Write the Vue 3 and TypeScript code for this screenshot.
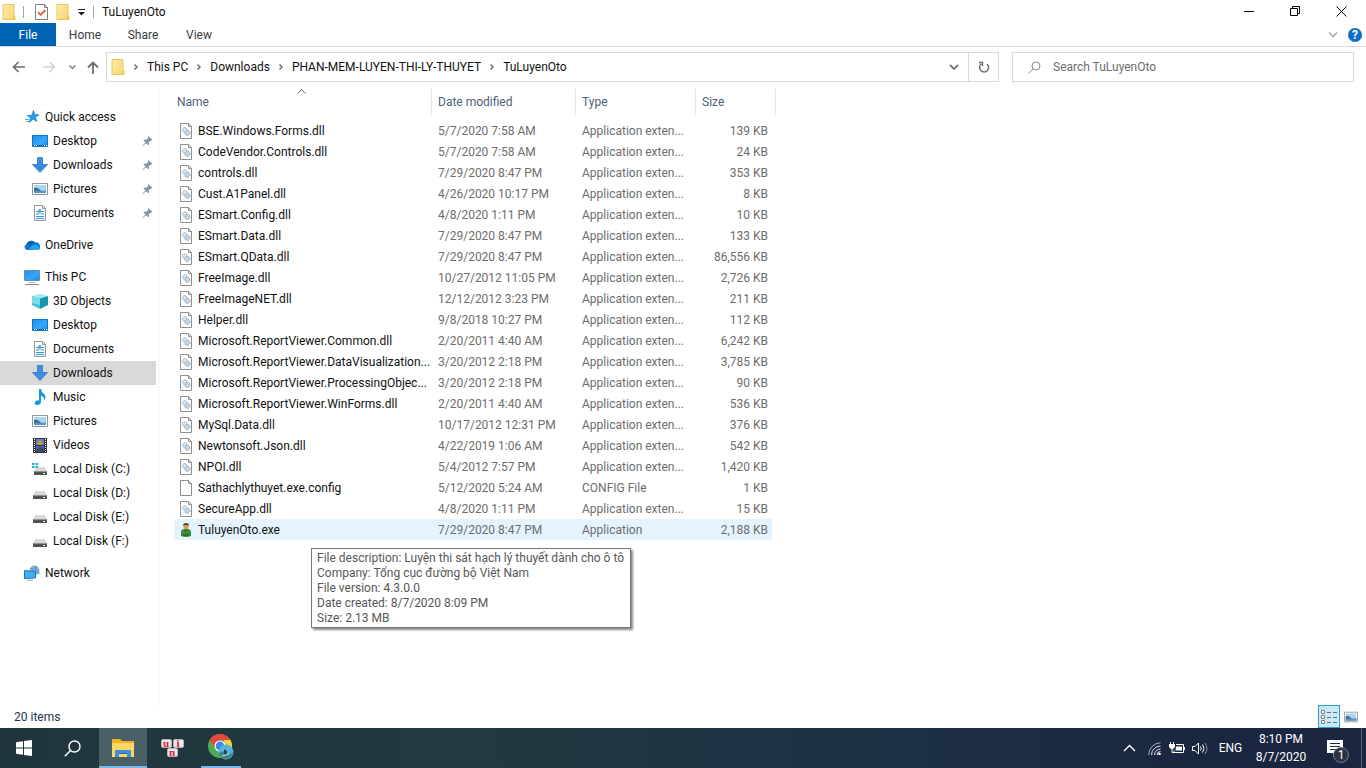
<script setup lang="ts">
interface NavItem {
  label: string
  icon: string
  root?: boolean
  pinned?: boolean
  selected?: boolean
}

interface FileRow {
  name: string
  date: string
  type: string
  size: string
  icon: string
  hover?: boolean
}

const groups: NavItem[][] = [
  [
    { label: 'Quick access', icon: 'star', root: true },
    { label: 'Desktop', icon: 'desktop', pinned: true },
    { label: 'Downloads', icon: 'download', pinned: true },
    { label: 'Pictures', icon: 'picture', pinned: true },
    { label: 'Documents', icon: 'document', pinned: true },
  ],
  [{ label: 'OneDrive', icon: 'cloud', root: true }],
  [
    { label: 'This PC', icon: 'pc', root: true },
    { label: '3D Objects', icon: 'cube' },
    { label: 'Desktop', icon: 'desktop' },
    { label: 'Documents', icon: 'document' },
    { label: 'Downloads', icon: 'download', selected: true },
    { label: 'Music', icon: 'music' },
    { label: 'Pictures', icon: 'picture' },
    { label: 'Videos', icon: 'video' },
    { label: 'Local Disk (C:)', icon: 'sysdisk' },
    { label: 'Local Disk (D:)', icon: 'disk' },
    { label: 'Local Disk (E:)', icon: 'disk' },
    { label: 'Local Disk (F:)', icon: 'disk' },
  ],
  [{ label: 'Network', icon: 'network', root: true }],
]

const dll = (name: string, date: string, size: string): FileRow => ({
  name,
  date,
  size,
  type: 'Application exten...',
  icon: 'dll',
})

const files: FileRow[] = [
  dll('BSE.Windows.Forms.dll', '5/7/2020 7:58 AM', '139 KB'),
  dll('CodeVendor.Controls.dll', '5/7/2020 7:58 AM', '24 KB'),
  dll('controls.dll', '7/29/2020 8:47 PM', '353 KB'),
  dll('Cust.A1Panel.dll', '4/26/2020 10:17 PM', '8 KB'),
  dll('ESmart.Config.dll', '4/8/2020 1:11 PM', '10 KB'),
  dll('ESmart.Data.dll', '7/29/2020 8:47 PM', '133 KB'),
  dll('ESmart.QData.dll', '7/29/2020 8:47 PM', '86,556 KB'),
  dll('FreeImage.dll', '10/27/2012 11:05 PM', '2,726 KB'),
  dll('FreeImageNET.dll', '12/12/2012 3:23 PM', '211 KB'),
  dll('Helper.dll', '9/8/2018 10:27 PM', '112 KB'),
  dll('Microsoft.ReportViewer.Common.dll', '2/20/2011 4:40 AM', '6,242 KB'),
  dll('Microsoft.ReportViewer.DataVisualization...', '3/20/2012 2:18 PM', '3,785 KB'),
  dll('Microsoft.ReportViewer.ProcessingObjec...', '3/20/2012 2:18 PM', '90 KB'),
  dll('Microsoft.ReportViewer.WinForms.dll', '2/20/2011 4:40 AM', '536 KB'),
  dll('MySql.Data.dll', '10/17/2012 12:31 PM', '376 KB'),
  dll('Newtonsoft.Json.dll', '4/22/2019 1:06 AM', '542 KB'),
  dll('NPOI.dll', '5/4/2012 7:57 PM', '1,420 KB'),
  { name: 'Sathachlythuyet.exe.config', date: '5/12/2020 5:24 AM', type: 'CONFIG File', size: '1 KB', icon: 'file' },
  dll('SecureApp.dll', '4/8/2020 1:11 PM', '15 KB'),
  { name: 'TuluyenOto.exe', date: '7/29/2020 8:47 PM', type: 'Application', size: '2,188 KB', icon: 'exe', hover: true },
]

const crumbs: string[] = ['This PC', 'Downloads', 'PHAN-MEM-LUYEN-THI-LY-THUYET', 'TuLuyenOto']

const tooltip: string[] = [
  'File description: Luyện thi sát hạch lý thuyết dành cho ô tô',
  'Company: Tổng cục đường bộ Việt Nam',
  'File version: 4.3.0.0',
  'Date created: 8/7/2020 8:09 PM',
  'Size: 2.13 MB',
]
</script>

<template>
  <div class="screen">
    <svg class="defs" aria-hidden="true">
      <defs>
        <linearGradient id="g-blue" x1="0" y1="0" x2="1" y2="1">
          <stop offset="0" stop-color="#1f8be6" /><stop offset="0.6" stop-color="#35aaf8" /><stop offset="1" stop-color="#1583e0" />
        </linearGradient>
        <linearGradient id="g-folder" x1="0" y1="0" x2="1" y2="1">
          <stop offset="0" stop-color="#fdeaa6" /><stop offset="1" stop-color="#f8d76f" />
        </linearGradient>
      </defs>
      <symbol id="i-folder" viewBox="0 0 14 16">
        <path d="M1 0.5h11v11l1 1v3H1z" fill="url(#g-folder)" stroke="#e9c665" />
        <path d="M11.5 11.5h1.5v4h-2.5z" fill="#f3c94f" />
      </symbol>
      <symbol id="i-star" viewBox="0 0 16 16">
        <path d="M9.500 1.500l1.300 4.100 4.200.1-3.500 2.600 1.400 4.200-3.700-2.300-4 3.300 1.300-4.600-3.300-2.300 4.500-.4z" fill="#2b9be8" stroke="#1c7fc8" stroke-width=".7" />
        <path d="M1 10.500h4M2 12.500h3" stroke="#5ab4ee" />
      </symbol>
      <symbol id="i-desktop" viewBox="0 0 16 16">
        <path d="M.5 2.500h15v11H.5z" fill="url(#g-blue)" stroke="#0b76cb" />
        <path d="M1 12.500h14" stroke="#1268b4" /><path d="M2 12.500h1M4 12.500h1M12 12.500h1M14 12.500h1" stroke="#fff" />
      </symbol>
      <symbol id="i-download" viewBox="0 0 16 16">
        <path d="M5.500.5h5v7h5L8 15.500.5 7.500h5z" fill="#3b8dde" stroke="#2f7ac9" stroke-width=".8" />
      </symbol>
      <symbol id="i-picture" viewBox="0 0 16 16">
        <path d="M.5 2.500h15v11H.5z" fill="#fff" stroke="#8d979f" />
        <path d="M2 4h12v8H2z" fill="#a9d5f3" /><path d="M2 7q4-1 6 2t6 0v3H2z" fill="#3d6f8e" /><path d="M2 10q6-1 12 0v2H2z" fill="#5c94bd" />
      </symbol>
      <symbol id="i-document" viewBox="0 0 16 16">
        <path d="M2.500.5h8l3 3v12h-11z" fill="#fff" stroke="#8b959c" /><path d="M10.500.5v3h3" fill="none" stroke="#8b959c" />
        <path d="M7 4.500h2M4 6.500h3M8 6.500h4M4 9h3.500M8.500 9H12M4 11.500h8M4 13.500h8" stroke="#3993cf" /><path d="M6 5h3v3H6z" fill="#67b0df" />
      </symbol>
      <symbol id="i-cloud" viewBox="0 0 16 16">
        <path d="M3 13a3 3 0 0 1-.5-5.800A5 5 0 0 1 11 5.500 4 4 0 0 1 16 10q0 3-3 3z" fill="#0f78d4" />
        <path d="M5 13L8 8q6-1 8 2.500Q16 13 13 13z" fill="#28a2ed" /><path d="M2.500 7.200A5 5 0 0 1 11 5.500L6 10z" fill="#0961b4" />
      </symbol>
      <symbol id="i-pc" viewBox="0 0 16 16">
        <path d="M.5 1.500h15v10H.5z" fill="url(#g-blue)" stroke="#6c8ea8" /><path d="M4 13.500h8" stroke="#9ccff0" /><path d="M1 15.500h14" stroke="#8f8f98" />
      </symbol>
      <symbol id="i-cube" viewBox="0 0 16 16">
        <path d="M0 3l8-2.500L16 3 8 6z" fill="#a6e9ef" /><path d="M0 3l8 2.500V16l-8-4z" fill="#42c3d5" /><path d="M16 3L8 5.500V16l8-4z" fill="#1597af" /><path d="M3 4l5 1.500V12l-8-2V4z" fill="#7adce8" />
      </symbol>
      <symbol id="i-music" viewBox="0 0 16 16">
        <path d="M7 0h2q0 3 3 5 3 3 0 7 1-4-3-5.500V13q-.5 3-4 3-3-.5-2-3 1.500-2.500 4-1.500z" fill="#1593dc" />
      </symbol>
      <symbol id="i-video" viewBox="0 0 16 16">
        <path d="M1 1h14v15H1z" fill="#343434" /><path d="M4 2h8v6H4z" fill="#6d7fd0" /><path d="M4 9h8v6H4z" fill="#3b66c4" />
        <path d="M5 6l3-3 3 3-2 2H6z" fill="#d19435" /><path d="M4 13l4-3 4 2v3H4z" fill="#3a4c60" /><path d="M9 4h2v2H9z" fill="#54b35e" />
        <path d="M2.500 2v13M13.500 2v13" stroke="#fff" stroke-dasharray="1 1" />
      </symbol>
      <symbol id="i-disk" viewBox="0 0 16 16">
        <path d="M3.500 6h9l2.500 4H1z" fill="#d9dbdb" /><path d="M1 10h14v4H1z" fill="#4c5352" /><path d="M1 10.500h14" stroke="#8d9493" /><path d="M11 12.500h2" stroke="#dff3e3" />
      </symbol>
      <symbol id="i-sysdisk" viewBox="0 0 16 16">
        <path d="M4.500 6h8l2.500 4H2z" fill="#d9dbdb" /><path d="M2 10h13v4H2z" fill="#4c5352" /><path d="M2 10.500h13" stroke="#8d9493" /><path d="M11 12.500h2" stroke="#dff3e3" />
        <path d="M0 2h2.500v2H0zM3.500 2H6v2H3.500zM0 5h2.500v2H0zM3.500 5H6v2H3.500z" fill="#18b3d3" />
      </symbol>
      <symbol id="i-network" viewBox="0 0 16 16">
        <circle cx="10.500" cy="5.500" r="5" fill="#7fb4d8" /><path d="M7 3q3 1 3 5M12 1q-2 3 1 5t2 3" stroke="#4585b5" fill="none" />
        <path d="M.5 5.500l11 1v6.500l-11 .5z" fill="#3faeee" stroke="#2276b5" /><path d="M3 15.500l6-.5" stroke="#7ab6da" />
      </symbol>
      <symbol id="i-pin" viewBox="0 0 12 12">
        <path d="M7 .5L11.500 5l-1 .8-1-.3-2 2 .2 2.300-1 .9-2.300-2.300L1 11.500.5 11l3.200-3.400L1.500 5.300l.9-.9 2.400.1 2-2-.6-1z" fill="#8c979f" />
      </symbol>
      <symbol id="i-file" viewBox="0 0 14 16">
        <path d="M1.500.5h8l3 3v12h-11z" fill="#fff" stroke="#8f8f8f" /><path d="M9.500.5v3h3" fill="none" stroke="#8f8f8f" />
      </symbol>
      <symbol id="i-dll" viewBox="0 0 14 16">
        <path d="M1.500.5h8l3 3v12h-11z" fill="#fff" stroke="#8f8f8f" /><path d="M9.500.5v3h3" fill="none" stroke="#8f8f8f" />
        <circle cx="5.700" cy="7" r="2.300" fill="#dce9f3" stroke="#8aa0b3" stroke-dasharray="1.300 .5" /><circle cx="8.300" cy="9.800" r="2.600" fill="#cfe0ee" stroke="#8aa0b3" stroke-dasharray="1.300 .5" /><circle cx="8.300" cy="9.800" r="1" fill="#fff" stroke="#9db2c4" stroke-width=".7" />
      </symbol>
      <symbol id="i-exe" viewBox="0 0 14 16">
        <path d="M2 14V10q0-2.500 3-3h4q3 .5 3 3v4q-5 2-10 0z" fill="#3e8f33" /><circle cx="7" cy="4.500" r="2.600" fill="#d99a62" /><path d="M4 3.500Q4 1 7 1t3 2.500q-3-1-6 0z" fill="#4d4a2a" />
        <path d="M4 13h6M5 7.500l2 2 2-2" stroke="#20561d" fill="none" />
      </symbol>
      <symbol id="i-chev" viewBox="0 0 8 8"><path d="M2.500 1.500L5 4 2.500 6.500" fill="none" stroke="#707070" stroke-width="1.500" /></symbol>
    </svg>

    <header class="titlebar">
      <svg class="folder"><use href="#i-folder" /></svg>
      <i class="sep"></i>
      <button class="plain check" aria-label="Properties">
        <svg width="13" height="16"><path d="M.5.5h9l3 3v12H.5z" fill="#fff" stroke="#7d7d7d" /><path d="M9.500.5v3h3" fill="none" stroke="#7d7d7d" /><path d="M3 8l2.500 3 5-5" fill="none" stroke="#d9663a" stroke-width="1.800" /></svg>
      </button>
      <button class="plain" aria-label="New folder"><svg class="folder"><use href="#i-folder" /></svg></button>
      <button class="plain more" aria-label="Customize toolbar"><svg width="8" height="7"><path d="M0 .5h7" stroke="#222" /><path d="M0 3h7L3.500 6.500z" fill="#222" /></svg></button>
      <i class="sep dark"></i>
      <span class="title">TuLuyenOto</span>
      <div class="controls">
        <button class="plain" aria-label="Minimize"><svg width="11" height="11"><path d="M0 5.500h10" stroke="#000" /></svg></button>
        <button class="plain" aria-label="Restore"><svg width="11" height="11"><path d="M.5 2.500h7v7h-7zM2.500 2.500v-2h7v7h-2" fill="none" stroke="#000" /></svg></button>
        <button class="plain" aria-label="Close"><svg width="11" height="11"><path d="M.5.5l10 10M10.500.5l-10 10" stroke="#000" /></svg></button>
      </div>
    </header>

    <nav class="ribbon">
      <button class="file">File</button>
      <button>Home</button>
      <button>Share</button>
      <button>View</button>
      <div class="ribbon-end">
        <button class="plain" aria-label="Expand ribbon"><svg width="10" height="6"><path d="M1 .5l4 4 4-4" fill="none" stroke="#a3a3a3" stroke-width="1.300" /></svg></button>
        <button class="help" aria-label="Help">?</button>
      </div>
    </nav>

    <div class="navbar">
      <div class="arrows">
        <button class="plain" aria-label="Back"><svg width="14" height="12"><path d="M13 6H2M6.500 1L1.500 6l5 5" fill="none" stroke="#6e6e6e" stroke-width="1.700" /></svg></button>
        <button class="plain forward" aria-label="Forward"><svg width="14" height="12"><path d="M1 6h11M7.500 1l5 5-5 5" fill="none" stroke="#d5d5d5" stroke-width="1.500" /></svg></button>
        <button class="plain recent" aria-label="Recent"><svg width="7" height="5"><path d="M.5.5l3 3 3-3" fill="none" stroke="#808080" stroke-width="1.500" /></svg></button>
        <button class="plain" aria-label="Up"><svg width="12" height="13"><path d="M6 13V2M1 6.500l5-5 5 5" fill="none" stroke="#6e6e6e" stroke-width="1.800" /></svg></button>
      </div>
      <div class="address">
        <svg class="folder"><use href="#i-folder" /></svg>
        <template v-for="c in crumbs" :key="c">
          <svg class="chev"><use href="#i-chev" /></svg>
          <a href="#">{{ c }}</a>
        </template>
        <button class="plain drop" aria-label="Previous locations"><svg width="10" height="7"><path d="M1 1l4 4 4-4" fill="none" stroke="#757575" stroke-width="1.800" /></svg></button>
        <button class="refresh" aria-label="Refresh"><svg width="12" height="12"><path d="M3.200 3A4.500 4.500 0 1 0 9 3M1 1.500h3.500V5" fill="none" stroke="#707070" stroke-width="1.500" /></svg></button>
      </div>
      <label class="search">
        <svg width="13" height="13"><circle cx="8" cy="5" r="4" fill="none" stroke="#8b8b8b" /><path d="M5 8L.5 12.500" stroke="#8b8b8b" /></svg>
        <input type="text" placeholder="Search TuLuyenOto" aria-label="Search TuLuyenOto" />
      </label>
    </div>

    <div class="body">
      <aside class="sidebar">
        <ul v-for="(g, gi) in groups" :key="gi">
          <li v-for="n in g" :key="n.label">
            <a href="#" :class="{ root: n.root, selected: n.selected }">
              <svg class="ico"><use :href="'#i-' + n.icon" /></svg>
              <span>{{ n.label }}</span>
              <svg v-if="n.pinned" class="pin"><use href="#i-pin" /></svg>
            </a>
          </li>
        </ul>
      </aside>

      <main class="content">
        <table>
          <colgroup><col class="c-name" /><col class="c-date" /><col class="c-type" /><col class="c-size" /><col class="c-end" /></colgroup>
          <thead>
            <tr>
              <th class="first"><button>Name</button><svg class="sort" width="9" height="5"><path d="M.5 4.500l4-4 4 4" fill="none" stroke="#666" /></svg></th>
              <th><button>Date modified</button></th>
              <th><button>Type</button></th>
              <th colspan="2"><button>Size</button></th>
            </tr>
          </thead>
          <tbody>
            <tr v-for="f in files" :key="f.name" :class="{ hover: f.hover }">
              <td class="name"><div><svg><use :href="'#i-' + f.icon" /></svg><span>{{ f.name }}</span></div></td>
              <td>{{ f.date }}</td>
              <td>{{ f.type }}</td>
              <td class="size">{{ f.size }}</td>
              <td class="end"></td>
            </tr>
          </tbody>
        </table>
        <div class="tooltip" role="tooltip">
          <div v-for="t in tooltip" :key="t">{{ t }}</div>
        </div>
      </main>
    </div>

    <footer class="status">
      <span>20 items</span>
      <div class="views">
        <button class="on" aria-label="Details view"><svg width="16" height="14"><path d="M.5.5h3v3h-3zM.5 5.500h3v3h-3zM.5 10.500h3v3h-3z" fill="#fff" stroke="#8a8078" /><path d="M6 2.500h4M12 2.500h4M6 7.500h4M12 7.500h4M6 12.500h4M12 12.500h4" stroke="#56748a" /></svg></button>
        <button aria-label="Large icons view"><svg width="14" height="14" viewBox="0 0 16 16"><use href="#i-picture" /></svg></button>
      </div>
    </footer>

    <div class="taskbar">
      <button class="start" aria-label="Start"><svg width="16" height="16"><path d="M0 2.200L7 1.200V7.500H0zM8 1.100L16 0V7.500H8zM0 8.500H7V14.800L0 13.800zM8 8.500H16V16L8 14.900z" fill="#fff" /></svg></button>
      <button class="find" aria-label="Search"><svg width="17" height="17"><circle cx="10.500" cy="6.500" r="5.500" fill="none" stroke="#fff" stroke-width="1.400" /><path d="M6.500 10.500L.8 16.200" stroke="#fff" stroke-width="1.500" /></svg></button>
      <button class="active" aria-label="File Explorer"><svg width="22" height="18"><path d="M0 0h8l2 2h12v16H0z" fill="#efb42d" /><path d="M0 4h22v14H0z" fill="#fdd765" /><path d="M3 18v-6q0-1 1-1h14q1 0 1 1v6h-4v-3H7v3z" fill="#3c8fdd" /><path d="M7 14.500h8" stroke="#2a6cae" /></svg></button>
      <button class="uni" aria-label="UniKey">
        <span class="keys"><b>u</b><b>i</b></span><span class="keys"><b>n</b></span>
      </button>
      <button class="chrome" aria-label="Google Chrome">
        <svg width="26" height="26" viewBox="0 0 26 26">
          <circle cx="12" cy="12" r="12" fill="#4aae50" /><path d="M1.600 6A12 12 0 0 1 22.400 6H12L7 14.500z" fill="#e3483b" /><path d="M22.400 6A12 12 0 0 1 12 24L17 15 16 6z" fill="#fbd13a" />
          <circle cx="12" cy="12" r="5.600" fill="#fff" /><circle cx="12" cy="12" r="4.400" fill="#4285e8" />
          <circle cx="18" cy="18" r="7.500" fill="#58b4d6" /><path d="M11 19q4-3 7 0t7-1q-1 7-7 7.500-6-.5-7-6.500z" fill="#3c8790" /><path d="M16 15l3 2v4l-3-1z" fill="#274a54" /><path d="M14 22l7-2" stroke="#d7dcc0" />
        </svg>
      </button>

      <div class="tray">
        <button class="t-up" aria-label="Show hidden icons"><svg width="13" height="8"><path d="M1 7l5.500-5.500L12 7" fill="none" stroke="#fff" stroke-width="1.400" /></svg></button>
        <button aria-label="Wi-Fi"><svg width="13" height="13"><g fill="none" stroke="#dfe3ea"><path d="M.7 13A12 12 0 0 1 12.500.8" opacity=".7" /><path d="M3.500 13A9 9 0 0 1 12.500 4" /><path d="M6.500 13a6 6 0 0 1 6-6" /><path d="M9 13a3.500 3.500 0 0 1 3.500-3.500" /></g><circle cx="11.500" cy="12" r="1.300" fill="#fff" /></svg></button>
        <button aria-label="Battery"><svg width="17" height="12"><path d="M1.500 0v2M4.500 0v2" stroke="#fff" /><path d="M0 2h6v3L4 7H2L0 5z" fill="#fff" /><path d="M3 7v3.500h2M7 2.500h7.500v8H5V8.500" fill="none" stroke="#fff" /><path d="M7 4.500h6v4H6.500z" fill="#fff" /><path d="M15.500 5v3" stroke="#fff" /></svg></button>
        <button aria-label="Volume"><svg width="17" height="13"><path d="M.5 4.500H3l3.500-3.500v11L3 8.500H.5z" fill="none" stroke="#fff" /><path d="M8.500 4.500q1.500 2 0 4M10.500 2.500q3 4 0 8" fill="none" stroke="#fff" /><path d="M13 1q4 5.500 0 11" fill="none" stroke="#8791a3" /></svg></button>
        <button class="lang">ENG</button>
        <button class="clock"><span>8:10 PM</span><span>8/7/2020</span></button>
        <button class="notif" aria-label="Notifications">
          <svg width="17" height="17"><path d="M0 0h16v13h-6l-4 4v-4H0z" fill="#fff" /><path d="M3 3.500h10M3 6.500h10M3 9.500h7" stroke="#1c2943" stroke-width="1.200" /></svg>
          <span class="badge">1</span>
        </button>
        <i class="peek"></i>
      </div>
    </div>
  </div>
</template>

<style>
body {
  background: #fff;
}
</style>

<style scoped>
.screen {
  min-height: 100vh;
  display: flex;
  flex-direction: column;
  background: #fff;
  font-family: Roboto, "Open Sans", sans-serif;
  font-size: 12px;
  line-height: 16px;
  color: #111;
}
.screen * {
  box-sizing: border-box;
}
.defs {
  position: absolute;
  width: 0;
  height: 0;
}
svg {
  display: block;
  flex: none;
}
button {
  font: inherit;
  color: inherit;
  border: 0;
  padding: 0;
  margin: 0;
  background: none;
  white-space: nowrap;
}
a {
  color: inherit;
  text-decoration: none;
  white-space: nowrap;
}
.plain {
  display: flex;
  align-items: center;
  justify-content: center;
}
.folder {
  width: 14px;
  height: 16px;
}

.titlebar {
  display: flex;
  align-items: center;
  height: 23px;
  padding-left: 2px;
}
.sep {
  width: 1px;
  height: 12px;
  background: #a5a5a5;
  margin-left: 7px;
}
.check {
  margin: 0 8px 0 11px;
}
.more {
  margin: 2px 0 0 8px;
}
.sep.dark {
  margin: 0 8px 0 7px;
}
.controls {
  display: flex;
  margin-left: auto;
  height: 21px;
}
.controls button {
  width: 46px;
}
.controls button:last-child {
  margin-right: 2px;
}

.ribbon {
  display: flex;
  height: 24px;
  border-bottom: 1px solid #dadbdc;
  color: #3b3b3b;
}
.ribbon > button {
  width: 58px;
}
.ribbon > button.file {
  width: 56px;
  background: #0063b1;
  color: #fff;
}
.ribbon > button:nth-child(4) {
  width: 54px;
}
.ribbon-end {
  display: flex;
  align-items: center;
  gap: 10px;
  margin-left: auto;
  padding-right: 4px;
}
.help {
  width: 14px;
  height: 14px;
  border-radius: 50%;
  background: #0f6fc6;
  color: #fff;
  font-weight: 700;
  line-height: 14px;
}

.navbar {
  display: flex;
  align-items: center;
  height: 40px;
  padding-right: 12px;
}
.arrows {
  display: flex;
  align-items: center;
  width: 106px;
  padding-left: 12px;
}
.arrows .plain {
  width: 14px;
}
.arrows .forward {
  margin: 0 9px 0 16px;
}
.arrows .recent {
  margin-right: 7px;
}
.address {
  flex: 1 1 893px;
  display: flex;
  align-items: center;
  height: 30px;
  border: 1px solid #d9d9d9;
  padding-left: 4px;
}
.chev {
  width: 8px;
  height: 8px;
  margin: 0 7px;
}
.drop {
  width: 28px;
  margin-left: auto;
}
.refresh {
  display: flex;
  align-items: center;
  justify-content: center;
  width: 30px;
  height: 28px;
  border-left: 1px solid #d9d9d9;
}
.search {
  flex: 0 1 342px;
  display: flex;
  align-items: center;
  gap: 12px;
  height: 30px;
  margin-left: 13px;
  padding-left: 15px;
  border: 1px solid #d9d9d9;
}
.search input {
  flex: 1;
  min-width: 0;
  font: inherit;
  border: 0;
  padding: 0;
  outline: 0;
  background: none;
}
.search input::placeholder {
  color: #6d6d6d;
  opacity: 1;
}

.body {
  flex: 1;
  display: flex;
}
.sidebar {
  width: 159px;
  padding: 18px 2px 0 0;
  border-right: 1px solid #f3f3f3;
}
ul {
  list-style: none;
  margin: 0 0 8px;
  padding: 0;
}
.sidebar a {
  display: flex;
  align-items: center;
  gap: 5px;
  height: 24px;
  padding: 0 3px 0 32px;
}
.sidebar a.root {
  padding-left: 24px;
}
.sidebar a.selected {
  background: #d9d9d9;
}
.ico {
  width: 16px;
  height: 16px;
}
.pin {
  width: 11px;
  height: 12px;
  margin-left: auto;
}

.content {
  position: relative;
  flex: 1;
  padding: 2px 15px;
}
table {
  width: 602px;
  table-layout: fixed;
  border-collapse: collapse;
}
.c-name {
  width: 258px;
}
.c-date {
  width: 144px;
}
.c-type {
  width: 120px;
}
.c-size {
  width: 76px;
}
.c-end {
  width: 4px;
}
th {
  position: relative;
  height: 31px;
  padding: 0;
  vertical-align: top;
  font-weight: 400;
}
th button {
  display: block;
  width: 100%;
  height: 26px;
  padding-left: 6px;
  border-right: 1px solid #e3e6e8;
  text-align: left;
  color: #4c607a;
}
th.first button {
  padding-left: 3px;
}
.sort {
  position: absolute;
  top: 0;
  left: 123px;
}
td {
  height: 21px;
  padding: 0 0 0 6px;
  line-height: 20px;
  color: #6d6d6d;
  white-space: nowrap;
}
td.name {
  color: #111;
  padding-left: 5px;
}
td.name div {
  display: flex;
  align-items: center;
  gap: 5px;
}
td.name svg {
  width: 14px;
  height: 16px;
}
td.size {
  padding: 0 4px 0 0;
  text-align: right;
}
td.end {
  padding: 0;
}
tr.hover td:not(.end) {
  background: #e5f3ff;
}
.tooltip {
  position: absolute;
  top: 461px;
  left: 152px;
  padding: 2px 6px 1px 5px;
  border: 1px solid #767676;
  background: #fff;
  box-shadow: 2px 2px 2px #8a8a8a;
  line-height: 15px;
  color: #575757;
  white-space: nowrap;
}

.status {
  display: flex;
  align-items: center;
  justify-content: space-between;
  height: 23px;
  padding: 0 4px 0 14px;
  color: #1f3350;
}
.views {
  display: flex;
}
.views button {
  display: flex;
  align-items: center;
  justify-content: center;
  width: 22px;
  height: 23px;
}
.views button.on {
  background: #cce8f6;
  border: 1px solid #26a0da;
}

.taskbar {
  display: flex;
  height: 40px;
  background: linear-gradient(90deg, #20363d 0%, #21393f 35%, #1d3044 65%, #1b2842 85%, #1a2540 100%);
  color: #fff;
}
.taskbar button {
  display: flex;
  align-items: center;
  justify-content: center;
}
.taskbar > button {
  width: 48px;
  margin-right: 1px;
}
.taskbar > .start {
  margin-right: 0;
}
.taskbar > .find {
  margin-right: 3px;
}
.taskbar > .active {
  background: #4b6065;
  border-bottom: 2px solid #76b9ed;
  padding-top: 1px;
}
.taskbar > .uni {
  flex-direction: column;
}
.keys {
  display: flex;
  gap: 1px;
}
.keys b {
  width: 11px;
  height: 9px;
  border-radius: 2px;
  background: #ece6e8;
  border: 1px solid #b9b3b5;
  color: #d02535;
  font-family: "Liberation Serif", serif;
  font-size: 11px;
  line-height: 6px;
  text-align: center;
}
.taskbar > .chrome {
  width: 40px;
  margin-left: 4px;
  border-bottom: 2px solid #76b9ed;
}
.tray {
  display: flex;
  margin-left: auto;
}
.tray button {
  width: 23px;
}
.tray button.t-up {
  width: 28px;
}
.tray button.lang {
  width: 37px;
}
.tray button.clock {
  flex-direction: column;
  width: 64px;
  line-height: 18px;
}
.tray button.notif {
  position: relative;
  width: 44px;
  margin-right: 4px;
}
.badge {
  position: absolute;
  left: 20px;
  top: 19px;
  width: 16px;
  height: 16px;
  border: 1px solid #747c8b;
  border-radius: 50%;
  background: #2b3340;
  line-height: 14px;
}
.peek {
  width: 5px;
  border-left: 1px solid #5d6679;
}
</style>
